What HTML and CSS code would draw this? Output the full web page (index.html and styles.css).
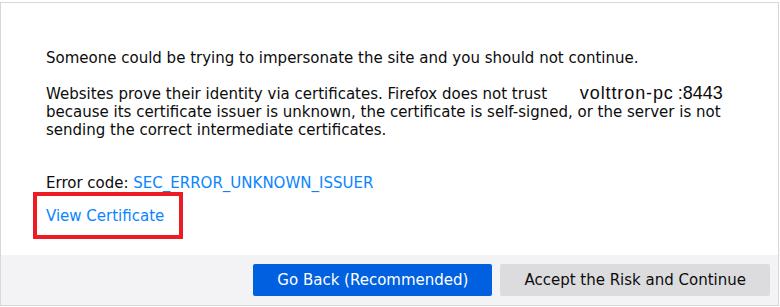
FILE: index.html
```html
<!DOCTYPE html>
<html lang="en">
<head>
    <meta charset="UTF-8">
    <title>Warning: Potential Security Risk Ahead</title>
    <link rel="stylesheet" href="styles.css">
</head>
<body>
    <div class="panel">
        <div class="content">
            <p>Someone could be trying to impersonate the site and you should not continue.</p>
            <p>Websites prove their identity via certificates. Firefox does not trust <span class="host">volttron-pc</span><span class="port">:8443</span> because its certificate issuer is unknown, the certificate is self-signed, or the server is not sending the correct intermediate certificates.</p>

            <p class="error-code">Error code: <a href="#">SEC_ERROR_UNKNOWN_ISSUER</a></p>
            <div class="view-cert">
                <a href="#">View Certificate</a>
            </div>
        </div>
        <div class="footer">
            <button class="primary">Go Back (Recommended)</button>
            <button>Accept the Risk and Continue</button>
        </div>
    </div>
</body>
</html>
```

FILE: styles.css
```css
body {
    margin: 0;
    padding-top: 2px;
    font-family: 'DejaVu Sans', sans-serif;
    font-size: 15px;
    color: #0c0c0d;
    background: white;
}
.panel {
    width: 777px;
    height: 302px;
    border: 1px solid #d7d7db;
    display: flex;
    flex-direction: column;
}
.content {
    flex: 1;
    padding: 46px 48px 0 45px;
}
p {
    margin: 0 0 18px 0;
    line-height: 18px;
}
.host {
    font-family: 'Liberation Sans', sans-serif;
    font-size: 18px;
    line-height: 16px;
    letter-spacing: 0.9px;
    margin-left: 28px;
}
.port {
    font-family: 'Liberation Sans', sans-serif;
    font-size: 18px;
    line-height: 16px;
    margin-left: 4px;
}
.error-code {
    margin-top: 35px;
    margin-bottom: 0;
}
a {
    color: #0a84ff;
    text-decoration: none;
}
.view-cert {
    display: inline-block;
    margin-left: -13px;
    padding: 11px 15px 10px 9px;
    line-height: 18px;
    border: 4px solid #ed1c24;
}
.footer {
    height: 50px;
    background: #f3f3f5;
    display: flex;
    justify-content: flex-end;
    align-items: center;
    gap: 8px;
    padding-right: 8px;
}
button {
    height: 32px;
    padding: 0 24px;
    border: none;
    border-radius: 2px;
    font-family: 'DejaVu Sans', sans-serif;
    font-size: 15px;
    background: #dcdcdf;
    color: #0c0c0d;
}
button.primary {
    background: #0060df;
    color: white;
}
```
